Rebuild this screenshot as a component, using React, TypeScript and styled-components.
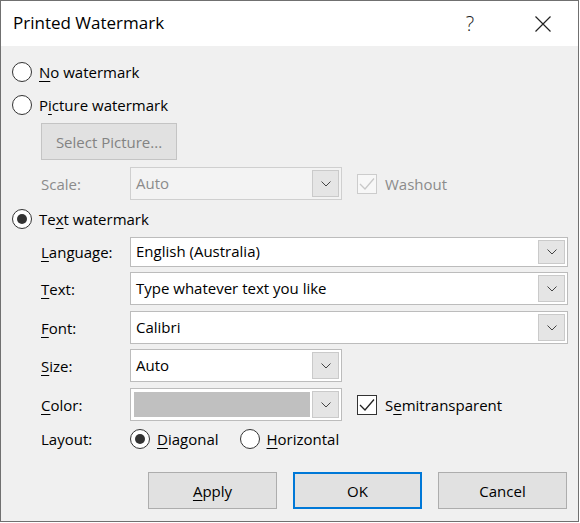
import React from 'react';
import styled, { createGlobalStyle } from 'styled-components';

const GlobalStyle = createGlobalStyle`
  html, body {
    margin: 0;
    padding: 0;
    background: #ffffff;
  }
  body {
    font-family: 'Segoe UI', 'Open Sans', 'Noto Sans', sans-serif;
    font-size: 15px;
    color: #000000;
  }
`;

const Window = styled.div`
  width: 579px;
  height: 522px;
  box-sizing: border-box;
  border: 1px solid #707070;
  display: flex;
  flex-direction: column;
  background: #f0f0f0;
`;

const TitleBar = styled.div`
  height: 45px;
  flex: none;
  display: flex;
  align-items: center;
  background: #ffffff;
  padding-left: 12px;
`;

const Title = styled.div`
  flex: 1;
  font-size: 17px;
  margin-top: -2px;
`;

const TitleButton = styled.div<{ $w: number }>`
  width: ${(p) => p.$w}px;
  height: 45px;
  display: flex;
  align-items: center;
  justify-content: center;
  color: #222;
  font-size: 20px;
  font-weight: 300;
`;

const Body = styled.div`
  flex: 1;
  display: flex;
  flex-direction: column;
  padding: 0 10px 12px 11px;
`;

const Row = styled.div<{ $top: number; $h: number; $indent?: number }>`
  display: flex;
  align-items: center;
  margin-top: ${(p) => p.$top}px;
  margin-left: ${(p) => p.$indent ?? 0}px;
  height: ${(p) => p.$h}px;
  flex: none;
`;

const RadioLabel = styled.label`
  display: flex;
  align-items: center;
  gap: 7px;
  margin-right: 21px;
  line-height: 20px;
`;

const RadioCircle = styled.span<{ $checked?: boolean }>`
  width: 20px;
  height: 20px;
  box-sizing: border-box;
  border-radius: 50%;
  border: 1px solid #333333;
  background: #ffffff;
  display: flex;
  align-items: center;
  justify-content: center;
  flex: none;
  &::after {
    content: '';
    display: ${(p) => (p.$checked ? 'block' : 'none')};
    width: 10px;
    height: 10px;
    border-radius: 50%;
    background: #333333;
  }
`;

const Key = styled.span`
  text-decoration: underline;
  text-underline-offset: 3px;
`;

const FieldLabel = styled.span<{ $disabled?: boolean }>`
  width: 89px;
  flex: none;
  color: ${(p) => (p.$disabled ? '#8b8b8b' : '#000')};
`;

const Button = styled.div<{ $w: number; $default?: boolean; $disabled?: boolean }>`
  width: ${(p) => p.$w}px;
  height: 37px;
  box-sizing: border-box;
  display: flex;
  align-items: center;
  justify-content: center;
  background: #e1e1e1;
  border: ${(p) =>
    p.$default ? '2px solid #0078d7' : p.$disabled ? '1px solid #c4c4c4' : '1px solid #adadad'};
  color: ${(p) => (p.$disabled ? '#838383' : '#000')};
  flex: none;
`;

const ButtonBar = styled.div`
  display: flex;
  justify-content: flex-end;
  gap: 16px;
  margin-top: 22px;
  padding-right: 1px;
`;

const ComboBox = styled.div<{ $w: number; $h: number; $disabled?: boolean }>`
  width: ${(p) => p.$w}px;
  height: ${(p) => p.$h}px;
  box-sizing: border-box;
  border: 1px solid ${(p) => (p.$disabled ? '#cfcfcf' : '#bcbcbc')};
  background: ${(p) => (p.$disabled ? '#f3f3f3' : '#ffffff')};
  display: flex;
  align-items: stretch;
  padding: 2px;
  flex: none;
`;

const ComboValue = styled.div<{ $disabled?: boolean }>`
  flex: 1;
  display: flex;
  align-items: center;
  padding-left: 3px;
  color: ${(p) => (p.$disabled ? '#8b8b8b' : '#000')};
  margin-top: -2px;
`;

const Swatch = styled.div`
  flex: 1;
  margin: 1px 2px 1px 1px;
  background: #c0c0c0;
`;

const DropButton = styled.div`
  width: 27px;
  flex: none;
  box-sizing: border-box;
  background: #e5e5e5;
  border: 1px solid #cacaca;
  display: flex;
  align-items: center;
  justify-content: center;
`;

const Check = styled.span<{ $disabled?: boolean }>`
  width: 20px;
  height: 20px;
  box-sizing: border-box;
  border: 1px solid ${(p) => (p.$disabled ? '#cccccc' : '#333333')};
  background: ${(p) => (p.$disabled ? '#f7f7f7' : '#ffffff')};
  display: flex;
  align-items: center;
  justify-content: center;
  flex: none;
`;

const CheckLabel = styled.label<{ $disabled?: boolean }>`
  display: flex;
  align-items: center;
  gap: 8px;
  margin-left: 15px;
  color: ${(p) => (p.$disabled ? '#8b8b8b' : '#000')};
`;

const Chevron = () => (
  <svg width="10" height="6" viewBox="0 0 10 6">
    <polyline points="0.5,0.5 5,5 9.5,0.5" fill="none" stroke="#444" strokeWidth="1" />
  </svg>
);

const Tick = ({ color }: { color: string }) => (
  <svg width="16" height="14" viewBox="0 0 16 14">
    <polyline points="1,7 6,12 15,1.5" fill="none" stroke={color} strokeWidth="1.3" />
  </svg>
);

const Combo: React.FC<{
  w: number;
  h: number;
  disabled?: boolean;
  swatch?: boolean;
  children?: React.ReactNode;
}> = ({ w, h, disabled, swatch, children }) => (
  <ComboBox $w={w} $h={h} $disabled={disabled}>
    {swatch ? <Swatch /> : <ComboValue $disabled={disabled}>{children}</ComboValue>}
    <DropButton>
      <Chevron />
    </DropButton>
  </ComboBox>
);

const Radio: React.FC<{ checked?: boolean; children: React.ReactNode }> = ({
  checked,
  children,
}) => (
  <RadioLabel>
    <RadioCircle $checked={checked} />
    <span>{children}</span>
  </RadioLabel>
);

export default function App() {
  return (
    <>
      <GlobalStyle />
      <Window>
        <TitleBar>
          <Title>Printed Watermark</Title>
          <TitleButton $w={100}>?</TitleButton>
          <TitleButton $w={46}>
            <svg width="16" height="16" viewBox="0 0 16 16">
              <path d="M0.5 0.5 L15.5 15.5 M15.5 0.5 L0.5 15.5" stroke="#222" strokeWidth="1.2" />
            </svg>
          </TitleButton>
          <TitleButton $w={12} />
        </TitleBar>
        <Body>
          <Row $top={15} $h={22}>
            <Radio>
              <Key>N</Key>o watermark
            </Radio>
          </Row>
          <Row $top={11} $h={22}>
            <Radio>
              P<Key>i</Key>cture watermark
            </Radio>
          </Row>
          <Row $top={7} $h={37} $indent={29}>
            <Button $w={136} $disabled>
              Select Picture...
            </Button>
          </Row>
          <Row $top={7} $h={33} $indent={29}>
            <FieldLabel $disabled>Scale:</FieldLabel>
            <Combo w={212} h={33} disabled>
              Auto
            </Combo>
            <CheckLabel $disabled>
              <Check $disabled>
                <Tick color="#c8c8c8" />
              </Check>
              Washout
            </CheckLabel>
          </Row>
          <Row $top={8} $h={22}>
            <Radio checked>
              Te<Key>x</Key>t watermark
            </Radio>
          </Row>
          <Row $top={7} $h={30} $indent={29}>
            <FieldLabel>
              <Key>L</Key>anguage:
            </FieldLabel>
            <Combo w={438} h={30}>
              English (Australia)
            </Combo>
          </Row>
          <Row $top={5} $h={33} $indent={29}>
            <FieldLabel>
              <Key>T</Key>ext:
            </FieldLabel>
            <Combo w={438} h={33}>
              Type whatever text you like
            </Combo>
          </Row>
          <Row $top={6} $h={33} $indent={29}>
            <FieldLabel>
              <Key>F</Key>ont:
            </FieldLabel>
            <Combo w={438} h={33}>
              Calibri
            </Combo>
          </Row>
          <Row $top={5} $h={33} $indent={29}>
            <FieldLabel>
              <Key>S</Key>ize:
            </FieldLabel>
            <Combo w={212} h={33}>
              Auto
            </Combo>
          </Row>
          <Row $top={6} $h={33} $indent={29}>
            <FieldLabel>
              <Key>C</Key>olor:
            </FieldLabel>
            <Combo w={212} h={33} swatch />
            <CheckLabel>
              <Check>
                <Tick color="#222" />
              </Check>
              <span>
                S<Key>e</Key>mitransparent
              </span>
            </CheckLabel>
          </Row>
          <Row $top={7} $h={22} $indent={29}>
            <FieldLabel>Layout:</FieldLabel>
            <Radio checked>
              <Key>D</Key>iagonal
            </Radio>
            <Radio>
              <Key>H</Key>orizontal
            </Radio>
          </Row>
          <ButtonBar>
            <Button $w={129}>
              <span>
                <Key>A</Key>pply
              </span>
            </Button>
            <Button $w={129} $default>
              OK
            </Button>
            <Button $w={129}>Cancel</Button>
          </ButtonBar>
        </Body>
      </Window>
    </>
  );
}
